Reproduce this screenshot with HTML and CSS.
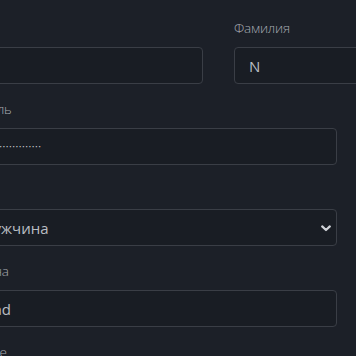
FILE: index.html
```html
<!DOCTYPE html>
<html lang="ru">
<head>
    <meta charset="UTF-8">
    <meta name="viewport" content="width=device-width, initial-scale=1.0">
    <title>Регистрация</title>
    <link rel="stylesheet" href="styles.css">
</head>
<body>
    <div class="form-container">
        <form id="register-form">
            <!-- Name row: two columns -->
            <div class="name-row">
                <div class="field">
                    <label for="first-name">Имя</label>
                    <input type="text" id="first-name" name="first-name" value="">
                </div>
                <div class="field">
                    <label for="last-name">Фамилия</label>
                    <input type="text" id="last-name" name="last-name" value="N">
                </div>
            </div>

            <div class="field">
                <label for="password">Пароль</label>
                <input type="password" id="password" name="password" value="passwordpassword123">
            </div>

            <div class="field">
                <label for="gender">Пол</label>
                <div class="select-wrap">
                    <select id="gender" name="gender">
                        <option value="male">Мужчина</option>
                        <option value="female">Женщина</option>
                    </select>
                    <svg class="chevron" width="10" height="7" viewBox="0 0 10 7">
                        <path d="M1.2 1.4 L5 5 L8.8 1.4" fill="none" stroke="#d0d3d8" stroke-width="2.2" stroke-linecap="round" stroke-linejoin="round"/>
                    </svg>
                </div>
            </div>

            <div class="field">
                <label for="city">Страна</label>
                <input type="text" id="city" name="city" value="Mad">
            </div>

            <div class="field">
                <label for="about">О себе</label>
                <input type="text" id="about" name="about" value="">
            </div>
        </form>
    </div>
</body>
</html>
```

FILE: styles.css
```css
/* Page */
body {
    margin: 0;
    height: 356px;
    overflow: hidden;
    background-color: #1c2028; /* Dark slate background */
    font-family: "Open Sans", "DejaVu Sans", sans-serif;
    color: #b9bdc3;
}

/* Form is wider than the window, its left part is cut off */
.form-container {
    width: 372px;
    margin-left: -35px;
    padding-top: 19px;
}

form {
    display: flex;
    flex-direction: column;
}

.field {
    display: flex;
    flex-direction: column;
    margin-bottom: 16px;
}

.name-row {
    display: grid;
    grid-template-columns: 238px 238px;
    column-gap: 31px;
}

label {
    height: 18px;
    line-height: 18px;
    margin-bottom: 10px;
    font-size: 13.5px;
    font-weight: 300;
    color: #a7abb2;
    letter-spacing: -0.2px;
}

/* Inputs and select */
input[type="text"],
input[type="password"],
select {
    height: 37px;
    margin: 0;
    box-sizing: border-box;
    padding: 0 14px;
    border: 1px solid #3a3e46;
    border-radius: 4px;
    background-color: #191d24;
    color: #b9bdc3;
    font-family: "Open Sans", "DejaVu Sans", sans-serif;
    font-size: 15px;
    outline: none;
}

input[type="password"] {
    font-size: 6px;
    letter-spacing: 1px;
    color: #c4c7cc;
}

.select-wrap {
    position: relative;
    display: flex;
    height: 37px;
}

select {
    flex: 1;
    appearance: none;
    -webkit-appearance: none;
}

/* Dropdown arrow over the select */
.chevron {
    position: absolute;
    right: 6px;
    top: 16px;
}
```
